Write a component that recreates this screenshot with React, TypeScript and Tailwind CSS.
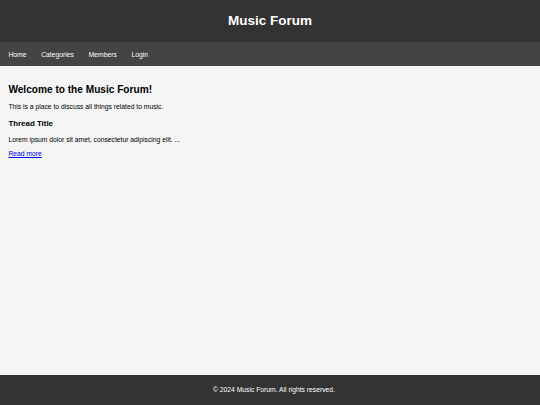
const NAV = ["Home", "Categories", "Members", "Login"]

export default function App() {
  return (
    <div className="flex h-[405px] w-full flex-col bg-[#f4f4f4] font-['Liberation_Sans',Arial,sans-serif] text-[6.75px] text-[#333]">
      <header className="flex h-[42px] shrink-0 items-center justify-center bg-[#333] text-white">
        <h1 className="text-[13.5px] font-bold leading-none">Music Forum</h1>
      </header>

      <nav className="flex h-[24px] shrink-0 items-center gap-[14.8px] bg-[#444] px-[8.4px] pt-[2px]">
        {NAV.map((item) => (
          <a key={item} href="#" className="leading-none text-white">
            {item}
          </a>
        ))}
      </nav>

      <main className="flex-1 px-[8.4px] pt-[18px] text-black">
        <h2 className="text-[10.125px] leading-[1.15] font-bold">Welcome to the Music Forum!</h2>
        <p className="mt-[7.5px] leading-[1.15]">This is a place to discuss all things related to music.</p>
        <article className="mt-[8px]">
          <h3 className="text-[7.9px] leading-[1.15] font-bold">Thread Title</h3>
          <p className="mt-[7.6px] leading-[1.15]">Lorem ipsum dolor sit amet, consectetur adipiscing elit. ...</p>
          <a href="#" className="mt-[6.5px] block leading-[1.15] text-[#0000ee] underline">
            Read more
          </a>
        </article>
      </main>

      <footer className="flex h-[30px] shrink-0 items-center justify-center bg-[#333] pl-[8px] text-white">
        <p className="leading-none">© 2024 Music Forum. All rights reserved.</p>
      </footer>
    </div>
  )
}
